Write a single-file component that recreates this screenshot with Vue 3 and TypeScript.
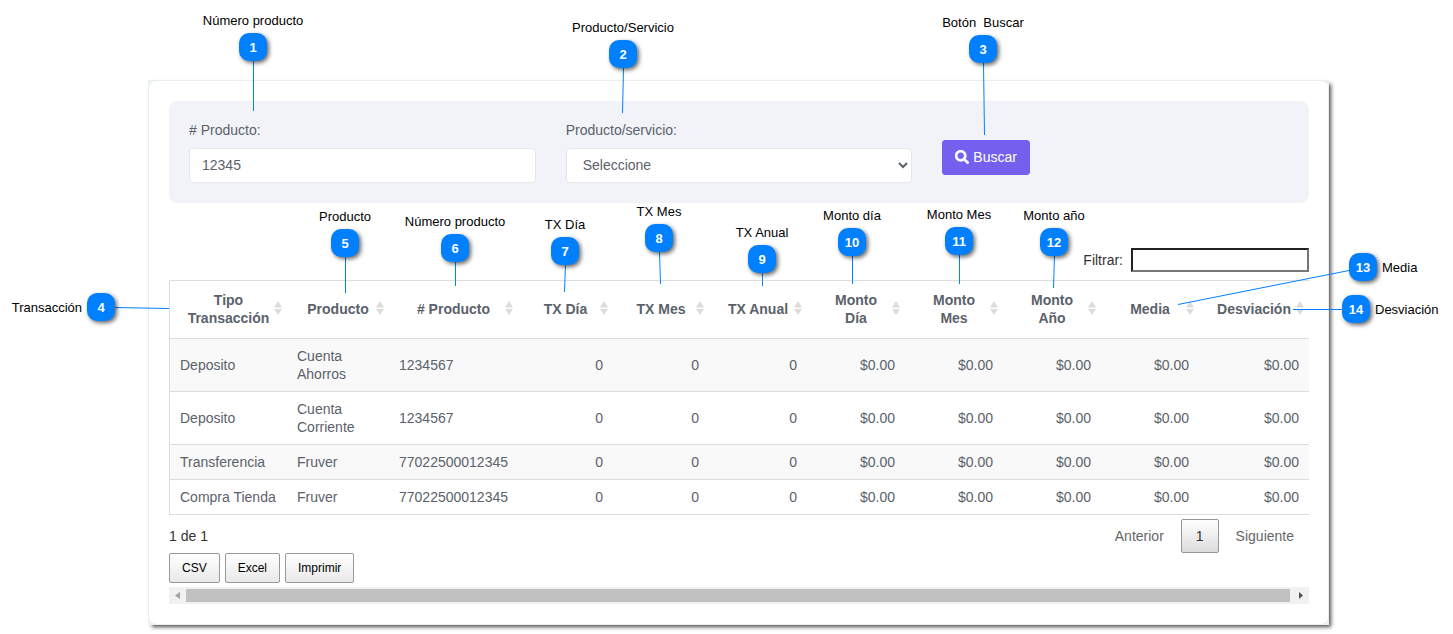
<script setup lang="ts">
import { ref } from 'vue'

interface Column {
  label: string
  width: number
  numeric: boolean
}

interface Callout {
  n: number
  text: string
  x: number
  y: number
  side: 'top' | 'left' | 'right'
  fromX: number
  fromY: number
  toX: number
  toY: number
}

const columns: Column[] = [
  { label: 'Tipo Transacción', width: 117, numeric: false },
  { label: 'Producto', width: 102, numeric: false },
  { label: '# Producto', width: 129, numeric: false },
  { label: 'TX Día', width: 95, numeric: true },
  { label: 'TX Mes', width: 96, numeric: true },
  { label: 'TX Anual', width: 98, numeric: true },
  { label: 'Monto Día', width: 98, numeric: true },
  { label: 'Monto Mes', width: 98, numeric: true },
  { label: 'Monto Año', width: 98, numeric: true },
  { label: 'Media', width: 98, numeric: true },
  { label: 'Desviación', width: 110, numeric: true },
]

const zeros = ['0', '0', '0', '$0.00', '$0.00', '$0.00', '$0.00', '$0.00']
const rows: string[][] = [
  ['Deposito', 'Cuenta Ahorros', '1234567', ...zeros],
  ['Deposito', 'Cuenta Corriente', '1234567', ...zeros],
  ['Transferencia', 'Fruver', '77022500012345', ...zeros],
  ['Compra Tienda', 'Fruver', '77022500012345', ...zeros],
]

const above = (n: number, text: string, x: number, y: number, toX: number, toY: number): Callout => ({
  n, text, x, y, side: 'top', fromX: x + 0.5, fromY: y + 14, toX, toY,
})

const callouts: Callout[] = [
  above(1, 'Número producto', 253, 47, 253.5, 111),
  above(2, 'Producto/Servicio', 623, 54, 622.5, 113),
  above(3, 'Botón  Buscar', 983, 49, 984.5, 135),
  { n: 4, text: 'Transacción', x: 101, y: 307, side: 'left', fromX: 115, fromY: 307.5, toX: 169, toY: 308.5 },
  above(5, 'Producto', 345, 243, 345.5, 293),
  above(6, 'Número producto', 455, 248, 455.5, 286),
  above(7, 'TX Día', 565, 251, 564.5, 292),
  above(8, 'TX Mes', 659, 238, 660.5, 284),
  above(9, 'TX Anual', 762, 259, 762.5, 286),
  above(10, 'Monto día', 852, 242, 852.5, 284),
  above(11, 'Monto Mes', 959, 241, 959.5, 284),
  above(12, 'Monto año', 1054, 242, 1053.5, 288),
  { n: 13, text: 'Media', x: 1363, y: 267, side: 'right', fromX: 1349, fromY: 270.5, toX: 1178, toY: 304.5 },
  { n: 14, text: 'Desviación', x: 1356, y: 309, side: 'right', fromX: 1342, fromY: 309.5, toX: 1293, toY: 309.5 },
]

const productNumber = ref('12345')
const service = ref('')
const filterText = ref('')
</script>

<template>
  <div class="page">
    <main class="frame">
      <div class="card">
        <form class="search" @submit.prevent>
          <div class="field">
            <label for="numero"># Producto:</label>
            <input id="numero" v-model="productNumber" type="text" class="control" />
          </div>
          <div class="field">
            <label for="servicio">Producto/servicio:</label>
            <select id="servicio" v-model="service" class="control">
              <option value="">Seleccione</option>
            </select>
          </div>
          <button type="submit" class="primary">
            <svg viewBox="0 0 512 512" width="14" height="14" aria-hidden="true">
              <path
                fill="currentColor"
                stroke="currentColor"
                stroke-width="16"
                d="M505 442.700 405.300 343c-4.500-4.500-10.600-7-17-7H372c27.600-35.300 44-79.700 44-128C416 93.100 322.900 0 208 0S0 93.100 0 208s93.100 208 208 208c48.300 0 92.700-16.400 128-44v16.300c0 6.400 2.500 12.500 7 17l99.700 99.700c9.400 9.400 24.600 9.400 33.900 0l28.300-28.300c9.400-9.400 9.400-24.600.1-34zM208 336c-70.700 0-128-57.200-128-128 0-70.700 57.200-128 128-128 70.700 0 128 57.200 128 128 0 70.700-57.200 128-128 128z"
              />
            </svg>
            Buscar
          </button>
        </form>

        <div class="filter">
          <label for="filtrar">Filtrar:</label>
          <input id="filtrar" v-model="filterText" type="text" />
        </div>

        <table>
          <colgroup>
            <col v-for="c in columns" :key="c.label" :style="{ width: c.width + 'px' }" />
          </colgroup>
          <thead>
            <tr>
              <th v-for="c in columns" :key="c.label" scope="col">
                <button type="button" class="sort">
                  {{ c.label }}
                  <svg class="arrows" viewBox="0 0 8 14" width="8" height="14" aria-hidden="true">
                    <path d="M0 6.500 4 0l4 6.500zM0 8h8l-4 6z" fill="#dcdcdc" />
                  </svg>
                </button>
              </th>
            </tr>
          </thead>
          <tbody>
            <tr v-for="(row, r) in rows" :key="r">
              <td v-for="(cell, i) in row" :key="i" :class="{ num: columns[i].numeric }">{{ cell }}</td>
            </tr>
          </tbody>
        </table>

        <div class="footer">
          <span>1 de 1</span>
          <nav class="pager" aria-label="Paginación">
            <button type="button">Anterior</button>
            <button type="button" class="current">1</button>
            <button type="button">Siguiente</button>
          </nav>
        </div>

        <div class="exports">
          <button type="button">CSV</button>
          <button type="button">Excel</button>
          <button type="button">Imprimir</button>
        </div>

        <div class="scrollbar" aria-hidden="true">
          <svg viewBox="0 0 17 17" width="17" height="17"><path d="M11 5v7L6 8.500z" fill="#a3a3a3" /></svg>
          <div class="thumb"></div>
          <svg viewBox="0 0 17 17" width="17" height="17"><path d="M7 5v7l4-3.500z" fill="#505050" /></svg>
        </div>
      </div>
    </main>

    <svg class="leads" aria-hidden="true">
      <line v-for="c in callouts" :key="c.n" :x1="c.fromX" :y1="c.fromY" :x2="c.toX" :y2="c.toY" />
    </svg>
    <div
      v-for="c in callouts"
      :key="c.n"
      class="callout"
      :class="c.side"
      :style="{ left: c.x + 'px', top: c.y + 'px' }"
    >
      <span class="badge">{{ c.n }}</span>
      <span class="caption">{{ c.text }}</span>
    </div>
  </div>
</template>

<style>
body {
  margin: 0;
  background: #fff;
}
</style>

<style scoped>
.page {
  position: relative;
  box-sizing: border-box;
  padding: 80px 124px 9px 148px;
  font-family: "Liberation Sans", Arial, sans-serif;
  font-size: 14px;
  line-height: 18px;
  color: #5b626b;
}

* {
  box-sizing: border-box;
}

button,
input,
select {
  font: inherit;
  color: inherit;
}

.frame {
  background: #eaf2f6;
  box-shadow: 3px 3px 4px -1px #000000b0;
}

.card {
  padding: 20px 19px 20px 20px;
  border: 1px solid #e9edf0;
  border-radius: 8px;
  background: #fff;
}

.search {
  display: grid;
  grid-template-columns: repeat(3, 1fr);
  gap: 30px;
  padding: 19px 20px 20px;
  border-radius: 8px;
  background: #f2f3f8;
}

.field {
  display: flex;
  flex-direction: column;
  gap: 7px;
}

.field label {
  line-height: 21px;
}

.control {
  width: 100%;
  height: 35px;
  padding: 0 12px 2px;
  border: 1px solid #e4e7ed;
  border-radius: 4px;
  background: #fff;
}

select.control {
  padding-right: 0;
}

.primary {
  display: flex;
  align-items: center;
  gap: 4px;
  align-self: end;
  justify-self: start;
  height: 35px;
  margin-bottom: 8px;
  padding: 0 12px 2px;
  border: 1px solid #7460ee;
  border-radius: 3px;
  background: #7460ee;
  color: #fff;
}

.filter {
  display: flex;
  align-items: center;
  justify-content: flex-end;
  gap: 8px;
  margin: 45px 0 8px;
  color: #333;
}

.filter input {
  width: 178px;
  height: 24px;
  padding: 1px 2px;
  border: 2px solid;
  border-color: #222 #767676 #767676 #222;
  background: #fff;
}

table {
  width: 100%;
  table-layout: fixed;
  border-collapse: separate;
  border-spacing: 0;
  border-top: 1px solid #ddd;
  border-left: 1px solid #ddd;
}

th,
td {
  border-bottom: 1px solid #ddd;
}

th {
  padding: 0;
}

td {
  padding: 8px 10px;
}

.sort {
  position: relative;
  width: 100%;
  height: 57px;
  padding: 0 16px 2px;
  border: 0;
  background: none;
  font-weight: bold;
  text-align: center;
}

.arrows {
  position: absolute;
  top: 20px;
  right: 5px;
}

tbody tr:nth-child(odd) {
  background: #f9f9f9;
}

.num {
  text-align: right;
}

.footer {
  display: flex;
  align-items: center;
  justify-content: space-between;
  margin-top: 4px;
  color: #333;
}

.pager {
  display: flex;
  gap: 2px;
}

.pager button {
  height: 34px;
  padding: 0 14px;
  border: 1px solid transparent;
  border-radius: 2px;
  background: none;
  color: #666;
}

.pager .current {
  border-color: #979797;
  background: linear-gradient(#fff, #dcdcdc);
  color: #333;
}

.exports {
  display: flex;
  gap: 5px;
}

.exports button {
  height: 30px;
  padding: 0 12px;
  border: 1px solid #999;
  border-radius: 2px;
  background: linear-gradient(#fff, #e9e9e9);
  font-size: 12px;
  color: #000;
}

.scrollbar {
  display: flex;
  align-items: center;
  height: 17px;
  margin-top: 4px;
  background: #f1f1f1;
}

.thumb {
  flex: 1;
  height: 13px;
  margin-right: 2px;
  background: #c1c1c1;
}

.leads {
  position: absolute;
  inset: 0;
  width: 100%;
  height: 100%;
  pointer-events: none;
}

.leads line {
  stroke: #0080ff;
  stroke-width: 1;
}

.callout {
  position: absolute;
  display: flex;
  align-items: center;
  justify-content: center;
  width: 0;
  height: 0;
  font-size: 13px;
  color: #000;
}

.badge {
  flex: none;
  width: 28px;
  height: 28px;
  padding-top: 1px;
  border-radius: 10px;
  background: #0080ff;
  box-shadow: 2px 2px 4px #00000099;
  color: #fff;
  font-weight: bold;
  line-height: 28px;
  text-align: center;
}

.caption {
  position: absolute;
  padding-top: 2px;
  white-space: pre;
}

.top .caption {
  bottom: 17px;
}

.left .caption {
  right: 19px;
}

.right .caption {
  left: 19px;
}
</style>
